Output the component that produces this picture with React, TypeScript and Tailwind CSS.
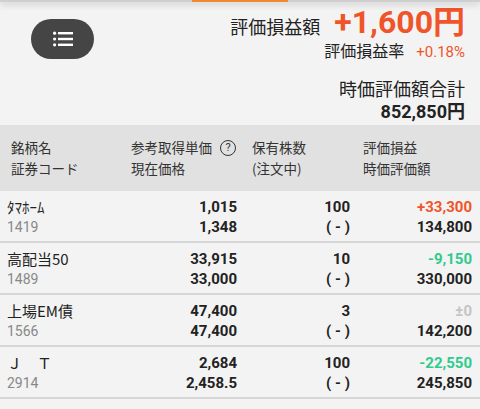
import React from "react";

type Row = {
  name: string;
  code: string;
  cost: string;
  price: string;
  qty: string;
  pl: string;
  plTone: "up" | "down" | "flat";
  value: string;
};

const rows: Row[] = [
  { name: "ﾀﾏﾎｰﾑ", code: "1419", cost: "1,015", price: "1,348", qty: "100", pl: "+33,300", plTone: "up", value: "134,800" },
  { name: "高配当50", code: "1489", cost: "33,915", price: "33,000", qty: "10", pl: "-9,150", plTone: "down", value: "330,000" },
  { name: "上場EM債", code: "1566", cost: "47,400", price: "47,400", qty: "3", pl: "±0", plTone: "flat", value: "142,200" },
  { name: "Ｊ　Ｔ", code: "2914", cost: "2,684", price: "2,458.5", qty: "100", pl: "-22,550", plTone: "down", value: "245,850" },
];

const jp = "font-['Noto_Sans_CJK_JP',sans-serif]";
const num = "font-['Roboto','Noto_Sans_CJK_JP',sans-serif]";

const toneClass = {
  up: "text-[#f0552a]",
  down: "text-[#2ecb8d]",
  flat: "text-[#c4c4c4]",
};

const ListIcon = () => (
  <svg width="20" height="16" viewBox="0 0 20 16" fill="none">
    <circle cx="1.6" cy="2.2" r="1.6" fill="white" />
    <circle cx="1.6" cy="8" r="1.6" fill="white" />
    <circle cx="1.6" cy="13.8" r="1.6" fill="white" />
    <rect x="5" y="1" width="15" height="2.4" fill="white" />
    <rect x="5" y="6.8" width="15" height="2.4" fill="white" />
    <rect x="5" y="12.6" width="15" height="2.4" fill="white" />
  </svg>
);

export default function App() {
  return (
    <div className={`w-[480px] min-h-[409px] bg-[#f3f3f3] text-[#222] ${jp}`}>
      {/* top tab strip */}
      <div className="relative z-10 h-[2px] bg-[#cfcfcf] shadow-[0_2px_6px_rgba(0,0,0,0.3)]">
        <div className="ml-[192px] w-[96px] h-[2px] bg-[#ef8a2e]" />
      </div>

      {/* summary */}
      <div className="flex justify-between pt-[2px] pr-[15px] pb-[1px]">
        <button className="ml-[31px] mt-[15px] w-[63px] h-[40px] rounded-full bg-[#454545] flex items-center justify-center">
          <ListIcon />
        </button>
        <div className="flex flex-col items-end">
          <div className="flex items-end h-[36px] pb-[2px]">
            <span className="text-[18px] leading-[24px] mr-[14px]">評価損益額</span>
            <span className={`text-[32px] leading-[32px] font-bold text-[#f0552a] ${num}`}>
              +1,600円
            </span>
          </div>
          <div className="flex items-baseline h-[20px] leading-[20px]">
            <span className="text-[16px] mr-[12px]">評価損益率</span>
            <span className={`text-[15px] text-[#f0552a] ${num}`}>+0.18%</span>
          </div>
          <div className="mt-[16px] text-[18px] leading-[24px]">時価評価額合計</div>
          <div className={`text-[18px] leading-[24px] font-bold ${num}`}>852,850円</div>
        </div>
      </div>

      {/* table header */}
      <div className="h-[66px] bg-[#e1e1e1] pt-[12px] pl-[11px] grid grid-cols-[120px_121px_111px_1fr] text-[13.5px] leading-[21px] text-[#333]">
        <div>
          <div>銘柄名</div>
          <div>証券コード</div>
        </div>
        <div>
          <div className="flex items-center">
            参考取得単価
            <span className={`ml-[8px] w-[16px] h-[16px] rounded-full border-[1.5px] border-[#333] flex items-center justify-center text-[11px] leading-none ${num}`}>
              ?
            </span>
          </div>
          <div>現在価格</div>
        </div>
        <div>
          <div>保有株数</div>
          <div>(注文中)</div>
        </div>
        <div>
          <div>評価損益</div>
          <div>時価評価額</div>
        </div>
      </div>

      {/* rows */}
      {rows.map((r) => (
        <div
          key={r.code}
          className="h-[52px] pt-[6px] pl-[7px] pr-[8px] border-b-2 border-[#d6d6d6] grid grid-cols-[113px_117px_113px_1fr] leading-[20px]"
        >
          <div>
            <div className="text-[15px]">{r.name}</div>
            <div className={`text-[14px] text-[#888] ${num}`}>{r.code}</div>
          </div>
          <div className={`text-right text-[15px] font-bold ${num}`}>
            <div>{r.cost}</div>
            <div>{r.price}</div>
          </div>
          <div className={`text-right text-[15px] font-bold ${num}`}>
            <div>{r.qty}</div>
            <div className="whitespace-pre">( - )</div>
          </div>
          <div className={`text-right text-[15px] font-bold ${num}`}>
            <div className={toneClass[r.plTone]}>{r.pl}</div>
            <div>{r.value}</div>
          </div>
        </div>
      ))}
    </div>
  );
}
